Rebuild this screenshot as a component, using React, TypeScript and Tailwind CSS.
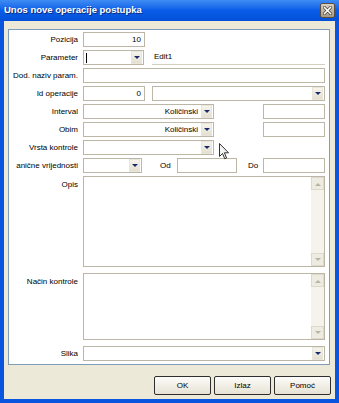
const font = "font-['Liberation_Sans',Tahoma,Arial,sans-serif]";

function Tri({ up, gray }: { up?: boolean; gray?: boolean }) {
  return (
    <svg width="6" height="4" viewBox="0 0 6 4">
      <path d={up ? "M0 4 L3 1 L6 4 Z" : "M0 0 L6 0 L3 3 Z"} fill={gray ? "#B8B4A6" : "#1A2A6C"} />
    </svg>
  );
}

function DropBtn() {
  return (
    <div className="w-[11px] h-[13px] mr-px bg-gradient-to-b from-[#F6F4EC] to-[#E4E0D0] border border-[#E8E5DA] flex items-center justify-center">
      <Tri />
    </div>
  );
}

function Label({ children, top }: { children: React.ReactNode; top?: boolean }) {
  return (
    <div className={`w-[69px] shrink-0 text-right whitespace-nowrap ${top ? "pt-[3px]" : ""}`}>
      {children}
    </div>
  );
}

function Scroll() {
  return (
    <div className="w-[13px] h-full bg-[#F5F3EC] flex flex-col justify-between">
      <div className="h-[13px] bg-[#EEEBE0] border border-[#DDD9CC] flex items-center justify-center">
        <Tri up gray />
      </div>
      <div className="h-[13px] bg-[#EEEBE0] border border-[#DDD9CC] flex items-center justify-center">
        <Tri gray />
      </div>
    </div>
  );
}

function Cursor() {
  return (
    <svg className="absolute left-[219px] top-[143px]" width="11" height="17" viewBox="0 0 11 17">
      <path
        d="M0.5 0.5 L0.5 13.5 L3.5 10.5 L5.8 15.8 L7.6 15 L5.4 9.8 L9.5 9.8 Z"
        fill="#F4F4F4"
        stroke="#303030"
        strokeWidth="1"
        strokeLinejoin="round"
      />
    </svg>
  );
}

export default function App() {
  const box = "h-[15px] bg-white border border-[#BBB6A6] flex items-center";
  return (
    <div className={`w-[339px] h-[403px] bg-[#0A55E0] flex flex-col text-[8px] text-black relative ${font}`}>
      {/* title bar */}
      <div className="h-[21px] shrink-0 bg-gradient-to-b from-[#3F8CF3] via-[#0A5CE8] to-[#0350D8] flex items-center pl-[4px] pr-[4px]">
        <div className="flex-1 text-white font-bold text-[9.5px] [text-shadow:1px_1px_0_#0A2C7A]">
          Unos nove operacije postupka
        </div>
        <div className="w-[15px] h-[15px] rounded-[2px] border border-[#5C4E3E] bg-gradient-to-b from-[#D9D1C4] to-[#A69884] flex items-center justify-center">
          <svg width="9" height="9" viewBox="0 0 9 9">
            <path d="M1.5 1.5 L7.5 7.5 M7.5 1.5 L1.5 7.5" stroke="#3E3428" strokeWidth="3" strokeLinecap="square" />
            <path d="M1.5 1.5 L7.5 7.5 M7.5 1.5 L1.5 7.5" stroke="#FFFFFF" strokeWidth="1.6" strokeLinecap="square" />
          </svg>
        </div>
      </div>

      {/* body */}
      <div className="flex-1 mx-[4px] mb-[4px] bg-[#ECE9D8] flex flex-col">
        <div className="mt-[8px] ml-[4px] w-[322px] h-[336px] bg-white border border-[#7F9DB9] flex flex-col gap-[3px] pt-[2px] pr-[4px]">
          {/* Pozicija */}
          <div className="flex items-center gap-[5px]">
            <Label>Pozicija</Label>
            <div className={`${box} w-[62px] justify-end pr-[3px]`}>10</div>
          </div>
          {/* Parameter */}
          <div className="flex items-center gap-[5px]">
            <Label>Parameter</Label>
            <div className={`${box} w-[61px]`}>
              <div className="flex-1 pl-[2px] flex items-center">
                <div className="w-px h-[10px] bg-black" />
              </div>
              <DropBtn />
            </div>
            <div className="flex-1 ml-[3px] h-[14px] border-b border-[#D4D0C0] shadow-[0_1px_0_#FFFFFF] pl-[2px] leading-[12px]">
              Edit1
            </div>
          </div>
          {/* Dod. naziv */}
          <div className="flex items-center gap-[5px]">
            <Label>Dod. naziv param.</Label>
            <div className={`${box} flex-1`} />
          </div>
          {/* Id operacije */}
          <div className="flex items-center gap-[5px]">
            <Label>Id operacije</Label>
            <div className={`${box} w-[62px] justify-end pr-[3px]`}>0</div>
            <div className={`${box} flex-1 ml-[2px] justify-end`}>
              <DropBtn />
            </div>
          </div>
          {/* Interval */}
          <div className="flex items-center gap-[5px]">
            <Label>Interval</Label>
            <div className={`${box} w-[131px]`}>
              <div className="flex-1 text-right pr-[3px]">Količinski</div>
              <DropBtn />
            </div>
            <div className="flex-1" />
            <div className={`${box} w-[62px]`} />
          </div>
          {/* Obim */}
          <div className="flex items-center gap-[5px]">
            <Label>Obim</Label>
            <div className={`${box} w-[131px]`}>
              <div className="flex-1 text-right pr-[3px]">Količinski</div>
              <DropBtn />
            </div>
            <div className="flex-1" />
            <div className={`${box} w-[62px]`} />
          </div>
          {/* Vrsta kontrole */}
          <div className="flex items-center gap-[5px]">
            <Label>Vrsta kontrole</Label>
            <div className={`${box} w-[131px] justify-end`}>
              <DropBtn />
            </div>
          </div>
          {/* Granične vrijednosti */}
          <div className="flex items-center">
            <div className="w-[74px] shrink-0 text-right pr-[5px] whitespace-nowrap">anične vrijednosti</div>
            <div className={`${box} w-[59px] justify-end`}>
              <DropBtn />
            </div>
            <div className="w-[35px] pl-[18px]">Od</div>
            <div className={`${box} w-[60px]`} />
            <div className="w-[26px] pl-[11px]">Do</div>
            <div className={`${box} flex-1`} />
          </div>
          {/* Opis */}
          <div className="flex items-start gap-[5px]">
            <Label top>Opis</Label>
            <div className="flex-1 h-[91px] bg-white border border-[#BBB6A6] flex justify-end">
              <Scroll />
            </div>
          </div>
          {/* Način kontrole */}
          <div className="flex items-start gap-[5px] mt-[3px]">
            <Label top>Način kontrole</Label>
            <div className="flex-1 h-[67px] bg-white border border-[#BBB6A6] flex justify-end">
              <Scroll />
            </div>
          </div>
          {/* Slika */}
          <div className="flex items-center gap-[5px] mt-[3px]">
            <Label>Slika</Label>
            <div className={`${box} flex-1 justify-end`}>
              <DropBtn />
            </div>
          </div>
        </div>

        {/* buttons */}
        <div className="mt-[11px] flex justify-end gap-[3px] pr-[4px]">
          {["OK", "Izlaz", "Pomoć"].map((t) => (
            <div
              key={t}
              className="w-[57px] h-[19px] rounded-[2px] border border-[#2E2E2E] bg-gradient-to-b from-[#FCFCF9] to-[#E6E2D4] flex items-center justify-center"
            >
              {t}
            </div>
          ))}
        </div>
      </div>

      <Cursor />
    </div>
  );
}
